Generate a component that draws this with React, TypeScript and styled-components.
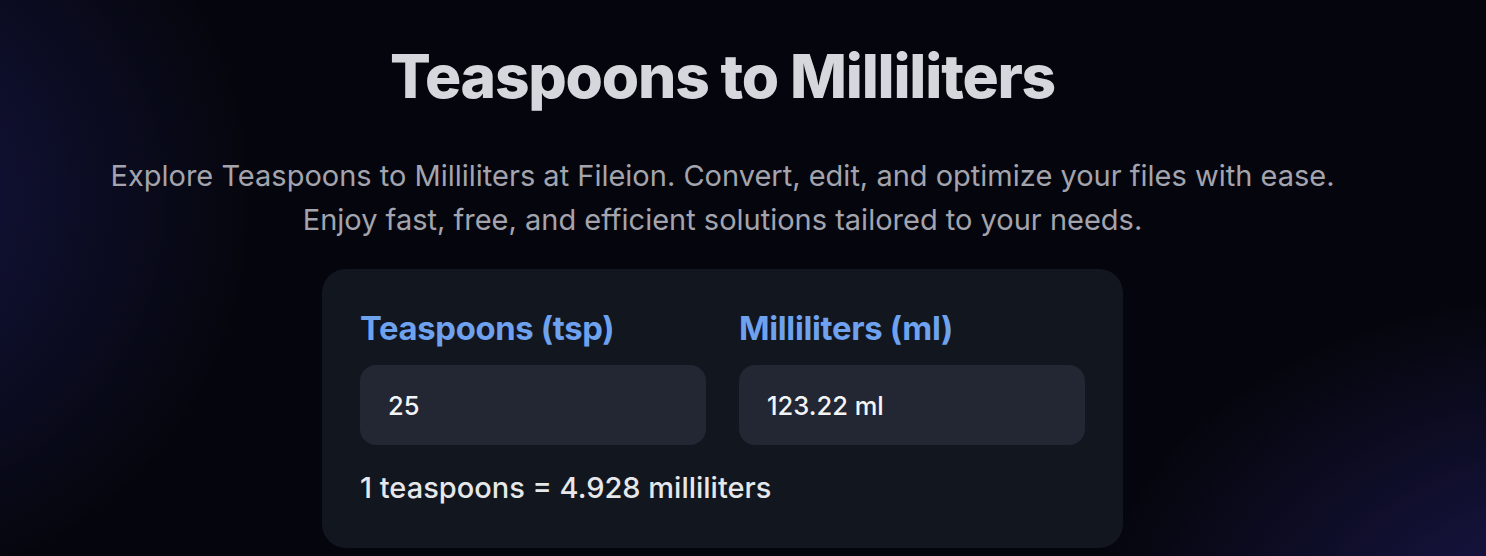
import { useState } from 'react';
import styled, { createGlobalStyle } from 'styled-components';

const GlobalStyle = createGlobalStyle`
  html, body {
    margin: 0;
    padding: 0;
    background: #05060d;
  }
  body {
    font-family: Inter, "Noto Sans", sans-serif;
    -webkit-font-smoothing: antialiased;
  }
`;

const TSP_TO_ML = 4.92892;

function App() {
  const [tsp, setTsp] = useState('25');
  const ml = (parseFloat(tsp) || 0) * TSP_TO_ML;

  return (
    <>
      <GlobalStyle />
      <Page>
        <Main>
          <Title>Teaspoons to Milliliters</Title>
          <Lead>
            Explore Teaspoons to Milliliters at Fileion. Convert, edit, and optimize your files with ease.
            Enjoy fast, free, and efficient solutions tailored to your needs.
          </Lead>
          <Card>
            <Fields>
              <Field>
                <Label htmlFor="tsp">Teaspoons (tsp)</Label>
                <Input id="tsp" value={tsp} onChange={(e) => setTsp(e.target.value)} />
              </Field>
              <Field>
                <Label htmlFor="ml">Milliliters (ml)</Label>
                <Input id="ml" readOnly value={`${ml.toFixed(2)} ml`} />
              </Field>
            </Fields>
            <Rate>1 teaspoons = 4.928 milliliters</Rate>
          </Card>
        </Main>
      </Page>
    </>
  );
}

export default App;

const Page = styled.div`
  min-height: 100vh;
  box-sizing: border-box;
  background:
    radial-gradient(ellipse 560px 560px at -140px 200px, rgba(30, 30, 96, 0.65), transparent 70%),
    radial-gradient(ellipse 680px 480px at 1580px 640px, rgba(38, 32, 108, 0.7), transparent 72%),
    #05060d;
  overflow: hidden;
`;

const Main = styled.main`
  display: flex;
  flex-direction: column;
  align-items: center;
  padding: 38px 41px 0 0;
`;

const Title = styled.h1`
  margin: 0;
  font-size: 60.4px;
  line-height: 76px;
  font-weight: 800;
  letter-spacing: -0.02em;
  color: #d6d7dc;
`;

const Lead = styled.p`
  margin: 40px 0 0;
  max-width: 1240px;
  text-align: center;
  font-size: 29px;
  line-height: 44px;
  font-weight: 400;
  color: #a3a4ad;
`;

const Card = styled.section`
  margin-top: 27px;
  width: 801px;
  box-sizing: border-box;
  padding: 40px 38px 42px;
  border-radius: 24px;
  background: #12161f;
`;

const Fields = styled.div`
  display: grid;
  grid-template-columns: minmax(0, 1fr) minmax(0, 1fr);
  gap: 33px;
`;

const Field = styled.div`
  display: flex;
  flex-direction: column;
  min-width: 0;
`;

const Label = styled.label`
  font-size: 32.8px;
  line-height: 38px;
  font-weight: 700;
  letter-spacing: -0.01em;
  color: #6ea1ee;
  margin-bottom: 18px;
`;

const Input = styled.input`
  width: 100%;
  min-width: 0;
  height: 80px;
  box-sizing: border-box;
  border: none;
  outline: none;
  border-radius: 16px;
  padding: 0 28px;
  background: #222733;
  color: #f3f4f6;
  font-family: Inter, "Noto Sans", sans-serif;
  font-size: 25.5px;
  font-weight: 500;
`;

const Rate = styled.p`
  margin: 25px 0 0;
  font-size: 29px;
  line-height: 36px;
  font-weight: 500;
  color: #e6e7ea;
`;
